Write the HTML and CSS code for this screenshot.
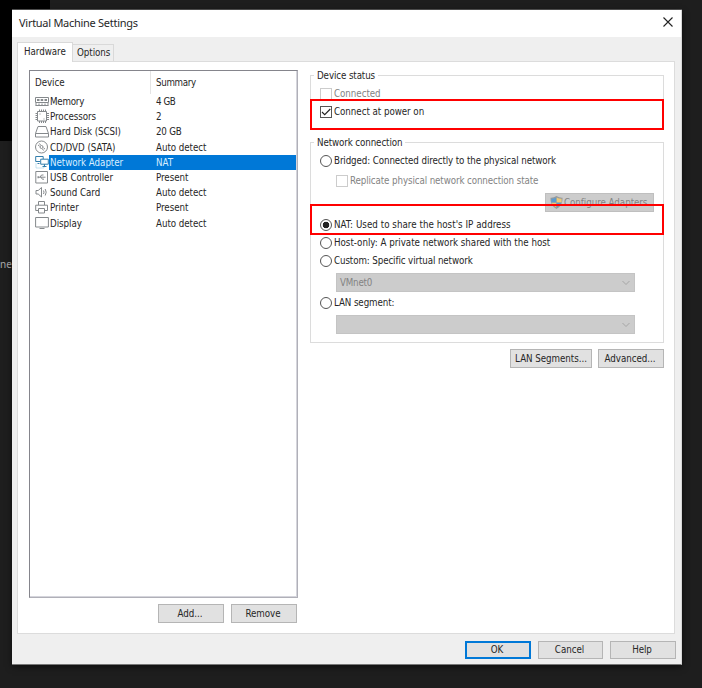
FILE: index.html
```
<!DOCTYPE html>
<html lang="en">
<head>
<meta charset="utf-8">
<title>Virtual Machine Settings</title>
<link rel="stylesheet" href="styles.css">
</head>
<body>
<div class="backdrop"></div>
<div class="behind">ne</div>
<main class="dialog">
  <header class="titlebar">
    <h1>Virtual Machine Settings</h1>
    <svg class="close" viewBox="0 0 10 10"><path d="M.5 .5l9 9M9.5 .5l-9 9"/></svg>
  </header>
  <nav class="tabs">
    <div class="tab active">Hardware</div>
    <div class="tab">Options</div>
  </nav>
  <section class="panel">
    <div class="left">
      <div class="list">
        <div class="head"><span class="dev">Device</span><span class="sum">Summary</span></div>
        <div class="row"><svg viewBox="0 0 14 15"><path d="M.5 3.500h13v5H.5zM.5 11.500h13M1 11.500V9M4 11V9.500M7 11V9.500M10 11V9.500M13 11.500V9"/><path class="thick" d="M2 6h2.500M5.700 6h2.500M9.500 6h2.500"/></svg><span class="name tight1">Memory</span><span class="val tight">4 GB</span></div>
        <div class="row"><svg viewBox="0 0 14 15"><path d="M2.500 2.500h9v9.500h-9zM4.500 2.500V.5M6.500 2.500V.5M8.500 2.500V.5M10.500 2.500V.5M4.500 14v-2M6.500 14v-2M8.500 14v-2M10.500 14v-2M.5 4.500h2M.5 6.500h2M.5 8.500h2M.5 10.500h2M11.500 4.500H14M11.500 6.500H14M11.500 8.500H14M11.500 10.500H14M4.500 5h1M8.500 10h1"/></svg><span class="name">Processors</span><span class="val">2</span></div>
        <div class="row"><svg viewBox="0 0 14 15"><path d="M.5 9.500L3 2.500h8l2.500 7v3.500H.5zM.5 9.500h13"/></svg><span class="name">Hard Disk (SCSI)</span><span class="val tight1">20 GB</span></div>
        <div class="row"><svg viewBox="0 0 14 15"><circle cx="6.500" cy="7" r="6"/><circle cx="6.500" cy="7" r="1.500"/><path d="M3 5l1.500 1M4.500 3.500l1 1.500M8.500 8l1.500 1M7.500 9l1 1.500"/></svg><span class="name">CD/DVD (SATA)</span><span class="val">Auto detect</span></div>
        <div class="row selected"><svg viewBox="0 0 14 15"><path class="dots" d="M1 8.500v4.500h8V10"/><path d="M5 6.500H.7V1.500h7.500V4M2.500 8.500h2"/><path d="M5.700 4.200h7.600v5H5.700zM9.500 9.200v2.300M7.500 11.500h4"/></svg><span class="name">Network Adapter</span><span class="val">NAT</span></div>
        <div class="row"><svg viewBox="0 0 14 15"><path d="M.8 1.500h11.700v11.500H.8zM3 7.200h7.500M5 7.200L6.500 5h2M6 7.200l1.300 2h1.700"/><path class="thick" d="M2.500 7.200h1.300"/></svg><span class="name">USB Controller</span><span class="val">Present</span></div>
        <div class="row"><svg viewBox="0 0 14 15"><path d="M1 5.500h2.200L6.500 2.500v9.500L3.200 9H1zM8.500 5.500q1 1.700 0 3.500M10.200 4q2 3.200 0 6.500"/></svg><span class="name">Sound Card</span><span class="val">Auto detect</span></div>
        <div class="row"><svg viewBox="0 0 14 15"><path d="M3.500 5V1.500h6V5M3.500 10.500H.7V5.200h11.800v5.300H9.500M3.500 8.500h6V13h-6z"/></svg><span class="name">Printer</span><span class="val">Present</span></div>
        <div class="row"><svg viewBox="0 0 14 15"><path d="M.6 1.500h12.800v9.500H.6zM4.500 12.500h5"/></svg><span class="name">Display</span><span class="val">Auto detect</span></div>
      </div>
      <div class="buttons"><button>Add...</button><button>Remove</button></div>
    </div>
    <div class="right">
      <fieldset class="status">
        <legend>Device status</legend>
        <label class="opt disabled"><i class="box"></i>Connected</label>
        <label class="opt power"><i class="box on"><svg viewBox="0 0 10 10"><path d="M1 5l2.700 2.700L9.300 2"/></svg></i>Connect at power on</label>
        <div class="mark mark-power"></div>
      </fieldset>
      <fieldset class="network">
        <legend>Network connection</legend>
        <label class="opt bridged"><i class="radio"></i><span class="snug">Bridged: Connected directly to the physical network</span></label>
        <label class="opt replicate disabled"><i class="box"></i><span class="snug">Replicate physical network connection state</span></label>
        <div class="configure"><svg viewBox="0 0 14 14"><path fill="#969a9c" d="M7 0q3 2 6.500 1.800Q14 10 7 14 0 10 .5 1.800 4 2 7 0z"/><path fill="#5b9bd0" d="M6.800 1.500v5.500H1.500V3q3 0 5.300-1.500z"/><path fill="#ecc978" d="M7.200 1.500Q9.500 3 12.500 3v4H7.200zM1.700 7.300h5.100v5.200q-4-2-5.100-5.200z"/><path fill="#5b9bd0" d="M7.200 7.300h5.100q-1 3.200-5.100 5.200z"/></svg><span>Configure Adapters</span></div>
        <label class="opt nat"><i class="radio picked"></i><span class="loose">NAT: Used to share the host's IP address</span></label>
        <label class="opt host"><i class="radio"></i><span class="even">Host-only: A private network shared with the host</span></label>
        <label class="opt custom"><i class="radio"></i><span class="snug">Custom: Specific virtual network</span></label>
        <div class="combo"><span>VMnet0</span><svg viewBox="0 0 8 6"><path d="M.5 1L4 4.500 7.500 1"/></svg></div>
        <label class="opt lan"><i class="radio"></i><span class="snug">LAN segment:</span></label>
        <div class="combo"><span></span><svg viewBox="0 0 8 6"><path d="M.5 1L4 4.500 7.500 1"/></svg></div>
        <div class="mark mark-nat"></div>
      </fieldset>
      <div class="buttons"><button class="wide">LAN Segments...</button><button>Advanced...</button></div>
    </div>
  </section>
  <footer><button class="default">OK</button><button class="cancel">Cancel</button><button>Help</button></footer>
</main>
</body>
</html>
```
FILE: styles.css
```
* { box-sizing: border-box; }

body {
  margin: 0;
  width: 702px;
  height: 688px;
  padding: 10px 0 0 12px;
  position: relative;
  overflow: hidden;
  background: #1e1e1e;
  color: #262626;
  font: 9.7px/12px "DejaVu Sans Condensed", "Noto Sans", sans-serif;
  letter-spacing: -0.04px;
  white-space: nowrap;
}

.backdrop { position: absolute; left: 0; top: 0; width: 50px; height: 141px; background: #000; }
.behind { position: absolute; left: 0; top: 258px; color: #aaa; font: 10px/12px "Noto Sans", sans-serif; }

.dialog {
  position: relative;
  width: 670px;
  height: 655px;
  display: flex;
  flex-direction: column;
  background: #efefef;
  border-right: 1px solid #d8d8d8;
  border-bottom: 1px solid #777;
  box-shadow: 0 2px 6px #0008, 0 -1px 0 #555;
}

.titlebar {
  flex: 0 0 27px;
  display: flex;
  justify-content: space-between;
  padding: 0 8px 0 7px;
  background: #fff;
}
h1 { margin: 5px 0 0; font: 11px/16px "Noto Sans", sans-serif; letter-spacing: -0.28px; }
.close { width: 10px; height: 10px; margin-top: 7px; fill: none; stroke: #222; stroke-width: 1.1; }

.tabs { height: 24px; display: flex; align-items: flex-end; padding-left: 5px; }
.tab {
  width: 41px;
  height: 17px;
  padding: 2px 0 0 4px;
  border: 1px solid #d9d9d9;
  border-width: 1px 1px 0 0;
}
.tab.active {
  width: 56px;
  height: 20px;
  margin-bottom: -1px;
  padding: 3px 0 0 6px;
  background: #fff;
  border-width: 1px 1px 0 1px;
  position: relative;
  z-index: 1;
}

.panel {
  width: 658px;
  height: 573px;
  margin-left: 5px;
  padding: 8px 10px 0 11px;
  display: flex;
  justify-content: space-between;
  background: #fff;
  border: 1px solid #dcdcdc;
}

.list {
  width: 269px;
  height: 528px;
  border: 1px solid #85858c;
  border-right-color: #b0b0b8;
  border-bottom-color: #b0b0b8;
  box-shadow: inset -1px -1px 0 #d5d5dc;
}
.head { display: flex; height: 23px; line-height: 24px; }
.dev { width: 121px; padding-left: 5px; border-right: 1px solid #e4e4e4; }
.sum { padding-left: 5px; letter-spacing: -0.32px; }
.row { display: flex; height: 15.2px; line-height: 16px; padding-left: 5px; margin-right: 1px; }
.row svg { width: 14px; height: 15px; fill: none; stroke: #85898c; stroke-width: 1; }
.row svg .thick { stroke-width: 2; }
.row .name { width: 106px; padding-left: 1px; }
.row .val { flex: 1; padding-left: 1px; }
.selected svg { stroke: #337eac; }
.selected svg .dots { stroke-dasharray: 1 1; stroke: #8bc4df; }
.selected span { background: #0078d7; color: #d9efff; }

.buttons { display: flex; justify-content: flex-end; gap: 7px; margin-top: 6px; }
.left .buttons { margin-right: 1px; }
button {
  width: 66px;
  height: 19px;
  padding: 0 2px 0 0;
  border: 1px solid #b5b5b5;
  background: #e1e1e1;
  color: #262626;
  font: inherit;
  letter-spacing: inherit;
}
button.wide { width: 82px; padding: 0; margin-right: -1px; }
button.cancel { width: 65px; }
.default { border: 2px solid #0078d7; }

.right { width: 354px; padding-top: 5px; }
fieldset {
  position: relative;
  margin: 0;
  padding: 0 0 0 9px;
  border: 1px solid #dcdcdc;
  display: block;
}
legend { height: 0; line-height: 0; padding: 0 3px; margin-left: -6px; letter-spacing: -0.1px; }
.status { height: 55px; }
.network { height: 201px; margin-top: 12px; }

.opt { display: flex; align-items: center; gap: 2px; height: 12px; }
.disabled { color: #838383; }
.box, .radio { flex: none; width: 12px; height: 12px; border: 1px solid #555; background: #fff; }
.radio { border-radius: 50%; }
.disabled .box { border-color: #ccc; }
.box svg { display: block; width: 10px; height: 10px; fill: none; stroke: #222; stroke-width: 1.1; }
.picked { background: radial-gradient(circle, #222 3px, #fff 3.6px); }
.status .disabled { margin-top: 12px; }
.power { margin-top: 6px; }
.bridged { margin-top: 12px; }
.replicate { margin: 8px 0 0 16px; }
.configure {
  width: 109px;
  height: 19px;
  margin: 6px 0 0 225px;
  padding-left: 4px;
  display: flex;
  align-items: center;
  gap: 1px;
  background: #ccc;
  border: 1px solid #bfbfbf;
  color: #838383;
}
.configure svg { width: 13px; height: 13px; }
.nat { margin-top: 7px; }
.host, .custom { margin-top: 6px; }
.lan { margin-top: 5px; }
.combo {
  width: 299px;
  height: 19px;
  margin: 6px 0 0 16px;
  padding: 0 4px 0 3px;
  display: flex;
  align-items: center;
  justify-content: space-between;
  background: #ccc;
  border: 1px solid #c4c4c4;
  color: #838383;
}
.combo span { letter-spacing: -0.2px; }
.combo svg { width: 8px; height: 6px; fill: none; stroke: #a5a5a5; }

.mark { position: absolute; left: -1px; width: 354px; height: 31px; border: 2px solid #f00; }
.mark-power { top: 23px; }
.mark-nat { top: 61px; }

.tight { letter-spacing: -0.4px; }
.tight1 { letter-spacing: -0.22px; }
.snug { letter-spacing: -0.1px; }
.even { letter-spacing: -0.01px; }
.loose { letter-spacing: 0.04px; }

footer { display: flex; justify-content: flex-end; gap: 7px; padding: 7px 5px 0 0; }
footer button { height: 18px; }
```
